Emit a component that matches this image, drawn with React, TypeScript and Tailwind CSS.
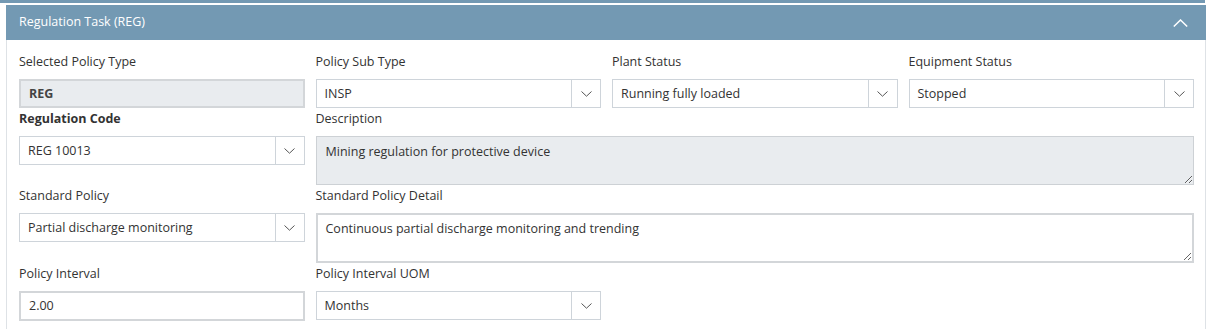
import { ReactNode } from 'react'

const font = { fontFamily: '"Open Sans", "Noto Sans", sans-serif' }

const Chevron = () => (
  <svg width="11" height="6" viewBox="0 0 11 6" fill="none">
    <polyline points="0.5,0.5 5.5,5.2 10.5,0.5" stroke="#555" strokeWidth="1" />
  </svg>
)

const Label = ({ children, bold }: { children: ReactNode; bold?: boolean }) => (
  <div className={`text-[12.5px] leading-[18px] mb-[8px] text-[#333] ${bold ? 'font-bold' : ''}`}>
    {children}
  </div>
)

const Select = ({ value }: { value: string }) => (
  <div className="flex h-[29px] border border-[#ced4da] bg-white">
    <div className="flex-1 flex items-center pl-[8px] pt-[1px] text-[12.5px] text-[#333]">{value}</div>
    <div className="w-[29px] border-l border-[#ced4da] flex items-center justify-center">
      <Chevron />
    </div>
  </div>
)

const Field = ({ label, children, bold, className }: { label: string; children: ReactNode; bold?: boolean; className?: string }) => (
  <div className={className}>
    <Label bold={bold}>{label}</Label>
    {children}
  </div>
)

const App = () => {
  return (
    <div className="w-[1207px] h-[329px] bg-white overflow-hidden" style={font}>
      <div className="h-[3px] w-[1205px] bg-[#7399b3]" />
      <div className="ml-[6px] mt-[2px] w-[1200px]">
        <div className="h-[35px] bg-[#7399b3] flex items-center justify-between pl-[13px] pr-[18px]">
          <span className="text-white text-[12.5px]">Regulation Task (REG)</span>
          <svg width="15" height="8" viewBox="0 0 15 8" fill="none">
            <polyline points="0.8,7.5 7.5,1 14.2,7.5" stroke="#fff" strokeWidth="1.5" />
          </svg>
        </div>
        <div className="border-x border-[#dee2e6] pl-[12px] pr-[11px] pt-[13px] pb-4">
          <div className="grid grid-cols-4 gap-x-[11px] gap-y-[2px]">
            <Field label="Selected Policy Type">
              <div className="h-[29px] border-2 border-[#d3d6d9] bg-[#e9ecef] flex items-center pl-[8px] pt-[1px] text-[12.5px] font-bold text-[#444]">
                REG
              </div>
            </Field>
            <Field label="Policy Sub Type">
              <Select value="INSP" />
            </Field>
            <Field label="Plant Status">
              <Select value="Running fully loaded" />
            </Field>
            <Field label="Equipment Status">
              <Select value="Stopped" />
            </Field>

            <Field label="Regulation Code" bold>
              <Select value="REG 10013" />
            </Field>
            <Field label="Description" className="col-span-3">
              <textarea
                readOnly
                defaultValue="Mining regulation for protective device"
                className="block w-full h-[49px] border border-[#cdd1d5] bg-[#e9ecef] px-[9px] py-[6px] text-[12.5px] text-[#333] outline-none"
              />
            </Field>

            <Field label="Standard Policy">
              <Select value="Partial discharge monitoring" />
            </Field>
            <Field label="Standard Policy Detail" className="col-span-3">
              <textarea
                readOnly
                defaultValue="Continuous partial discharge monitoring and trending"
                className="block w-full h-[50px] border-2 border-[#d3d6d9] bg-white px-[8px] py-[5px] text-[12.5px] text-[#333] outline-none"
              />
            </Field>

            <Field label="Policy Interval">
              <div className="h-[30px] border-2 border-[#d3d6d9] bg-white flex items-center pl-[8px] pt-[1px] text-[12.5px] text-[#333]">
                2.00
              </div>
            </Field>
            <Field label="Policy Interval UOM">
              <Select value="Months" />
            </Field>
          </div>
        </div>
      </div>
    </div>
  )
}

export default App
